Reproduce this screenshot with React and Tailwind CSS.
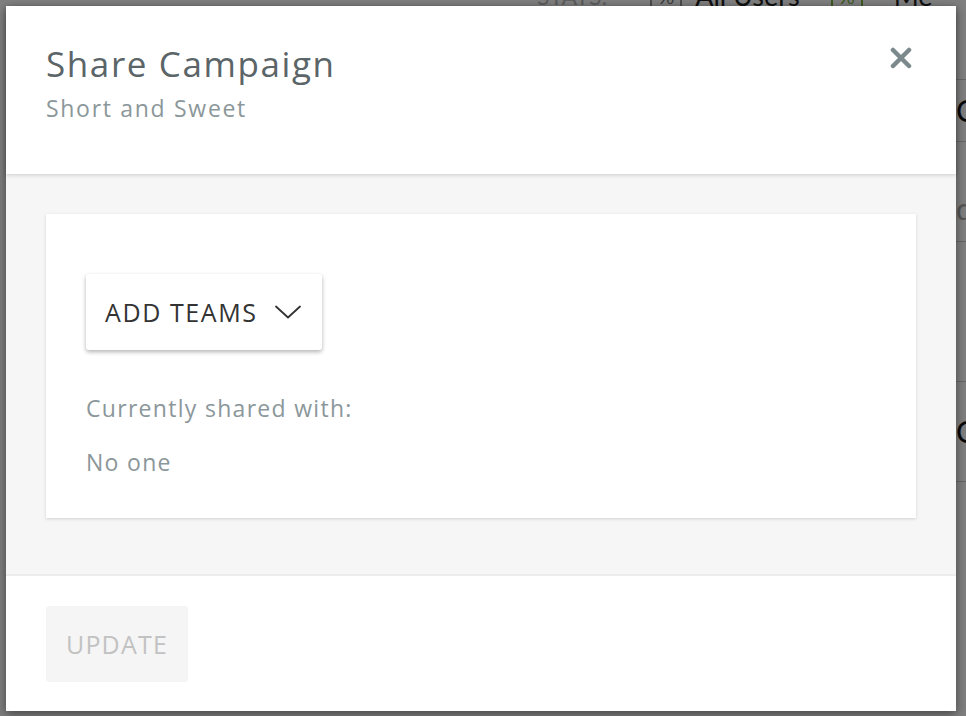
import React from "react";

function Background() {
  return (
    <div className="absolute inset-0 bg-white" style={{ fontFamily: "Lato, 'Liberation Sans', sans-serif" }}>
      <div className="flex items-center ml-[537px] mt-[-19px] h-[30px] text-[27px] leading-[30px] whitespace-nowrap">
        <span className="text-[#bbbbbb] text-[23px]">STATS:</span>
        <span className="ml-[43px] border-x-2 border-[#999] px-[6px] text-[#777] text-[20px] leading-[24px]">%</span>
        <span className="ml-[13px] text-[#222]">All Users</span>
        <span className="ml-[31px] border-x-2 border-[#7cb342] px-[6px] text-[#7cb342] text-[20px] leading-[24px]">%</span>
        <span className="ml-[31px] text-[#222]">Me</span>
      </div>
      <div className="flex flex-col ml-[940px] mt-[68px]">
        <div className="h-[62px] border-t border-[#cfcfcf] flex items-center pl-[16px] text-[30px] text-[#111]">C</div>
        <div className="h-[100px] border-t border-[#cfcfcf] flex items-end pb-[10px] pl-[16px] text-[30px] text-[#aaa]">d</div>
        <div className="h-[140px] border-t border-[#cfcfcf]"></div>
        <div className="h-[100px] border-t border-[#cfcfcf] flex items-center pl-[16px] text-[30px] text-[#111]">C</div>
        <div className="h-[100px] border-t border-[#cfcfcf]"></div>
      </div>
    </div>
  );
}

function Chevron() {
  return (
    <svg width="26" height="14" viewBox="0 0 26 14" fill="none">
      <path d="M1 1.5 L13 12.5 L25 1.5" stroke="#333" strokeWidth="1.8" strokeLinecap="round" strokeLinejoin="round" />
    </svg>
  );
}

function CloseIcon() {
  return (
    <svg width="22" height="22" viewBox="0 0 22 22" fill="none">
      <path d="M3 3 L19 19 M19 3 L3 19" stroke="#7b898c" strokeWidth="4.5" strokeLinecap="round" />
    </svg>
  );
}

export default function App() {
  return (
    <div className="relative w-[966px] h-[716px] overflow-hidden">
      <Background />
      <div className="absolute inset-0 bg-[rgba(0,0,0,0.5)]" />
      <div
        className="absolute left-[6px] top-[6px] w-[950px] h-[705px] bg-white flex flex-col shadow-[0_3px_10px_rgba(0,0,0,0.45)]"
        style={{ fontFamily: "'Open Sans', Lato, 'Liberation Sans', sans-serif" }}
      >
        <div className="relative z-10 h-[168px] px-[40px] pt-[37px] bg-white shadow-[0_1px_4px_rgba(0,0,0,0.18)] flex items-start justify-between">
          <div className="flex flex-col">
            <div className="text-[35px] leading-[42px] tracking-[1.6px] text-[#5b6568]">Share Campaign</div>
            <div className="mt-[9px] text-[23px] leading-[28px] tracking-[1.7px] text-[#8b979a]">Short and Sweet</div>
          </div>
          <div className="mt-[4px] mr-[4px]">
            <CloseIcon />
          </div>
        </div>
        <div className="h-[400px] bg-[#f6f6f6] px-[40px] pt-[40px]">
          <div className="h-[304px] bg-white shadow-[0_1px_3px_rgba(0,0,0,0.15)] pl-[40px] pt-[60px]">
            <button className="w-[236px] h-[76px] bg-white rounded-[3px] shadow-[0_2px_4px_rgba(0,0,0,0.3)] flex items-center justify-between pl-[19px] pr-[21px]">
              <span className="text-[25px] leading-[30px] tracking-[1.6px] text-[#333]">ADD TEAMS</span>
              <Chevron />
            </button>
            <div className="mt-[44px] text-[23px] leading-[28px] tracking-[1.3px] text-[#8b979a]">Currently shared with:</div>
            <div className="mt-[26px] text-[23px] leading-[28px] tracking-[1.3px] text-[#8b979a]">No one</div>
          </div>
        </div>
        <div className="flex-1 border-t-2 border-[#ececec] px-[40px] pt-[30px]">
          <div className="w-[142px] h-[76px] bg-[#f5f5f5] rounded-[3px] flex items-center justify-center">
            <span className="text-[25px] leading-[30px] tracking-[1.2px] text-[#c2c2c2]">UPDATE</span>
          </div>
        </div>
      </div>
    </div>
  );
}
